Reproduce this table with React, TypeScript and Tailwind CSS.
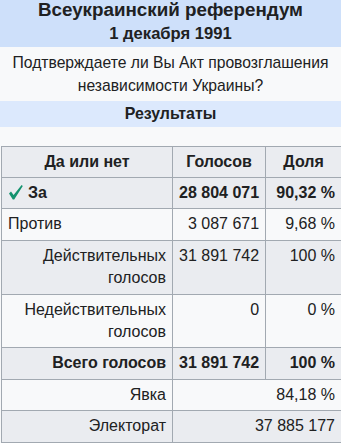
import React from 'react';

interface Row {
  label: string;
  votes: string;
  share?: string;
  bold?: boolean;
  shaded?: boolean;
  check?: boolean;
  alignLeft?: boolean;
  span?: boolean;
}

const rows: Row[] = [
  { label: 'За', votes: '28 804 071', share: '90,32 %', bold: true, shaded: true, check: true, alignLeft: true },
  { label: 'Против', votes: '3 087 671', share: '9,68 %', alignLeft: true },
  { label: 'Действительных голосов', votes: '31 891 742', share: '100 %', shaded: true },
  { label: 'Недействительных голосов', votes: '0', share: '0 %' },
  { label: 'Всего голосов', votes: '31 891 742', share: '100 %', bold: true, shaded: true },
  { label: 'Явка', votes: '84,18 %', span: true },
  { label: 'Электорат', votes: '37 885 177', shaded: true, span: true },
];

const cell = 'border border-[#a2a9b1] px-[6px] py-[4px] leading-[22.4px] align-top';

// green tick shown in front of the winning option
const Tick = () => (
  <svg className="inline-block align-[-2px] mr-[5px] ml-[1px]" width="14" height="15" viewBox="0 0 14 15">
    <path d="M0 8.6 L2 6.6 L4.6 10 L12.6 0 L13.8 1 L5.2 14.6 L3.8 14.6 Z" fill="#14936f" />
  </svg>
);

export default function App() {
  return (
    <div className="w-[341px] h-[443px] overflow-hidden bg-[#f8f9fa] text-[#202122] font-['Liberation_Sans',Arial,sans-serif]">
      {/* Header */}
      <div className="bg-[#cee0fa] h-[47px] text-center font-bold whitespace-nowrap">
        <div className="text-[18.8px] leading-[19px]">Всеукраинский референдум</div>
        <div className="text-[16.6px] leading-[24px] pt-[3px]">1 декабря 1991</div>
      </div>

      {/* Question */}
      <div className="text-center text-[15.7px] leading-[23.3px] pt-[4px] pb-[3px] h-[54px]">
        Подтверждаете ли Вы Акт провозглашения независимости Украины?
      </div>

      <div className="bg-[#dce9fd] h-[26px] text-center font-bold text-[15.9px] leading-[26px]">
        Результаты
      </div>

      {/* Results table */}
      <div className="pt-[18.6px] pl-[1px]">
        <table className="border-collapse w-[341px] text-[16px]">
          <thead>
            <tr className="bg-[#eaecf0]">
              <th className={`${cell} w-[171px] text-center`}>Да или нет</th>
              <th className={`${cell} w-[93px] text-center`}>Голосов</th>
              <th className={`${cell} text-center`}>Доля</th>
            </tr>
          </thead>
          <tbody>
            {rows.map((r) => (
              <tr key={r.label} className={r.shaded ? 'bg-[#eaecf0]' : 'bg-[#f8f9fa]'}>
                <td className={`${cell} ${r.alignLeft ? 'text-left' : 'text-right'} ${r.bold ? 'font-bold' : ''}`}>
                  {r.check && <Tick />}
                  {r.label === 'Действительных голосов' || r.label === 'Недействительных голосов' ? (
                    <>
                      {r.label.split(' ')[0]}
                      <br />
                      голосов
                    </>
                  ) : (
                    r.label
                  )}
                </td>
                {r.span ? (
                  <td className={`${cell} text-right whitespace-nowrap`} colSpan={2}>
                    {r.votes}
                  </td>
                ) : (
                  <>
                    <td className={`${cell} text-right whitespace-nowrap ${r.bold ? 'font-bold' : ''}`}>{r.votes}</td>
                    <td className={`${cell} text-right whitespace-nowrap ${r.bold ? 'font-bold' : ''}`}>{r.share}</td>
                  </>
                )}
              </tr>
            ))}
          </tbody>
        </table>
      </div>
    </div>
  );
}
